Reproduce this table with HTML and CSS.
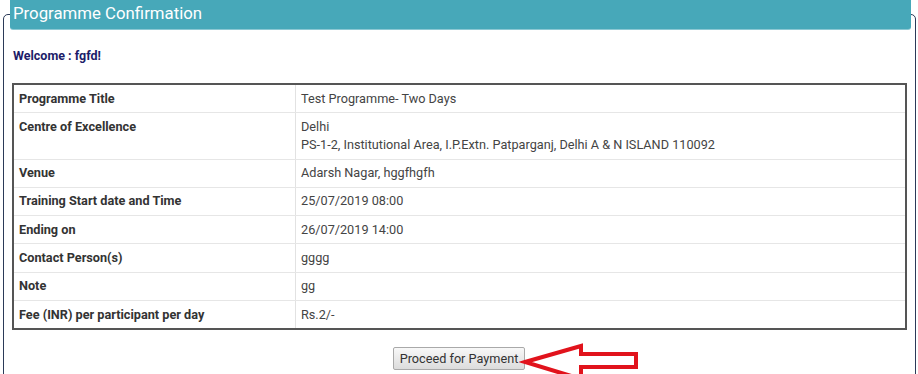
FILE: index.html
```html
<!DOCTYPE html>
<html>
<head>
<meta charset="utf-8">
<link rel="stylesheet" href="styles.css">
</head>
<body>
<fieldset class="panel">
  <legend class="panel-title">Programme Confirmation</legend>
  <div class="welcome">Welcome : fgfd!</div>
  <table class="details">
    <tr><th>Programme Title</th><td>Test Programme- Two Days</td></tr>
    <tr><th>Centre of Excellence</th><td>Delhi<br>PS-1-2, Institutional Area, I.P.Extn. Patparganj, Delhi A &amp; N ISLAND 110092</td></tr>
    <tr><th>Venue</th><td>Adarsh Nagar, hggfhgfh</td></tr>
    <tr><th>Training Start date and Time</th><td>25/07/2019 08:00</td></tr>
    <tr><th>Ending on</th><td>26/07/2019 14:00</td></tr>
    <tr><th>Contact Person(s)</th><td>gggg</td></tr>
    <tr><th>Note</th><td>gg</td></tr>
    <tr><th>Fee (INR) per participant per day</th><td>Rs.2/-</td></tr>
  </table>
  <div class="actions">
    <span class="btn-wrap">
      <button class="btn">Proceed for Payment</button>
      <svg class="arrow" width="124" height="40" viewBox="0 0 124 40">
        <polygon points="6,20 62,4 62,12 117,12 117,25 62,25 62,37" fill="none" stroke="#e1131c" stroke-width="4" stroke-linejoin="miter"/>
      </svg>
    </span>
  </div>
</fieldset>
</body>
</html>
```
FILE: styles.css
```css
html, body {
  margin: 0;
  padding: 0;
  background: #fff;
  overflow: hidden;
}
body {
  font-family: Roboto, "Liberation Sans", Arial, sans-serif;
  font-size: 12.7px;
  color: #333;
}
.panel {
  margin: 0 2px 0 3px;
  padding: 0 9px 40px 8px;
  border: 1px solid #2b3a58;
  border-radius: 5px;
  min-width: 0;
  box-sizing: border-box;
}
.panel-title {
  display: block;
  box-sizing: border-box;
  width: 901px;
  height: 29px;
  margin-left: -2px;
  padding: 0 0 0 3px;
  background: #47a8b9;
  color: #fff;
  font-size: 16.8px;
  line-height: 26px;
  border-radius: 0 0 3px 3px;
  box-shadow: 0 1px 0 #8cc8d3;
}
.welcome {
  margin-top: 20px;
  padding-left: 1px;
  height: 14px;
  line-height: 14px;
  font-size: 12.5px;
  font-weight: bold;
  color: #1c1c68;
}
.details {
  margin-top: 20px;
  width: 895px;
  border-collapse: collapse;
  border: 2px solid #555;
}
.details th,
.details td {
  text-align: left;
  vertical-align: top;
  padding: 4.65px 5px;
  line-height: 18px;
  border-bottom: 1px solid #e6e6e6;
}
.details th {
  width: 271px;
  font-weight: bold;
  color: #333;
  border-right: 1px solid #e2e2e2;
}
.details td {
  color: #444;
}
.actions {
  margin-top: 17px;
  text-align: center;
}
.btn-wrap {
  position: relative;
  display: inline-block;
}
.btn {
  font-family: Roboto, "Liberation Sans", Arial, sans-serif;
  font-size: 12.7px;
  color: #333;
  height: 23px;
  padding: 0 6px;
  border: 1px solid #a9a9a9;
  border-radius: 2px;
  background: linear-gradient(#f8f8f8, #dcdcdc);
}
.arrow {
  position: absolute;
  left: 126px;
  top: -5px;
}
```
